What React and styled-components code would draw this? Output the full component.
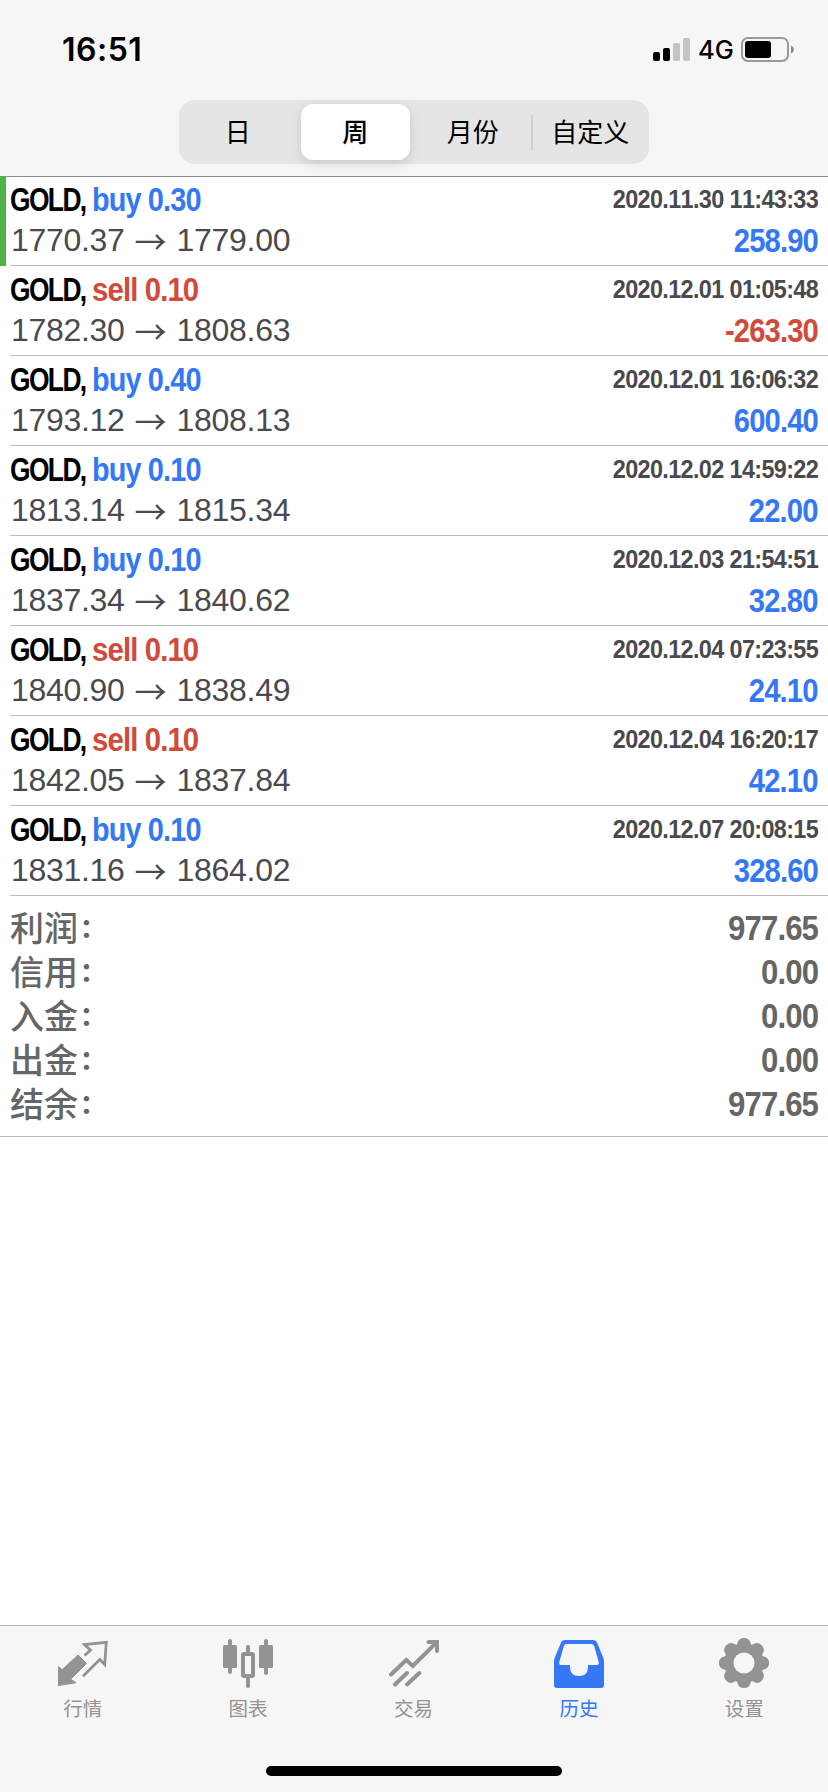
import React from "react";
import styled, { createGlobalStyle } from "styled-components";

const GlobalStyle = createGlobalStyle`
  * {
    box-sizing: border-box;
  }

  body {
    margin: 0;
    background: #fff;
    font-family: "Liberation Sans", "Noto Sans CJK SC", sans-serif;
    font-kerning: none;
  }
`;

const deals = [
  { side: "buy", lots: "0.30", open: "1770.37", close: "1779.00", time: "2020.11.30 11:43:33", profit: "258.90", marked: true },
  { side: "sell", lots: "0.10", open: "1782.30", close: "1808.63", time: "2020.12.01 01:05:48", profit: "-263.30" },
  { side: "buy", lots: "0.40", open: "1793.12", close: "1808.13", time: "2020.12.01 16:06:32", profit: "600.40" },
  { side: "buy", lots: "0.10", open: "1813.14", close: "1815.34", time: "2020.12.02 14:59:22", profit: "22.00" },
  { side: "buy", lots: "0.10", open: "1837.34", close: "1840.62", time: "2020.12.03 21:54:51", profit: "32.80" },
  { side: "sell", lots: "0.10", open: "1840.90", close: "1838.49", time: "2020.12.04 07:23:55", profit: "24.10" },
  { side: "sell", lots: "0.10", open: "1842.05", close: "1837.84", time: "2020.12.04 16:20:17", profit: "42.10" },
  { side: "buy", lots: "0.10", open: "1831.16", close: "1864.02", time: "2020.12.07 20:08:15", profit: "328.60" },
];

const totals = [
  ["利润", "977.65"],
  ["信用", "0.00"],
  ["入金", "0.00"],
  ["出金", "0.00"],
  ["结余", "977.65"],
];

const periods = ["日", "周", "月份", "自定义"];

const QuotesIcon = () => (
  <svg width="50" height="50" viewBox="0 0 50 50">
    <path
      d="M.5 28.5 4 31.8 20 17l8.5 8.5-15.8 15.8 5.3 3.4L.5 47.5z"
      fill="#939393"
      stroke="#939393"
      strokeLinejoin="round"
    />
    <path
      d="M26.5 17.500l6-5.300-6-5.700L48.300 4.300l-1.600 22.200-4.900-5L25 38.300"
      fill="none"
      stroke="#939393"
      strokeWidth="2.8"
    />
  </svg>
);

const ChartIcon = () => (
  <svg width="50" height="50" viewBox="0 0 50 50">
    <g fill="#939393">
      <rect x="5" y="1" width="4" height="35" rx="2" />
      <rect x="0" y="7" width="14" height="23" rx="1.5" />
      <rect x="41" y="1" width="4" height="36" rx="2" />
      <rect x="36" y="7" width="14" height="23" rx="1.5" />
      <rect x="23" y="7" width="4" height="8" rx="2" />
      <rect x="23" y="38" width="4" height="12" rx="2" />
    </g>
    <rect x="20" y="16" width="10" height="22" rx="1" fill="none" stroke="#939393" strokeWidth="4" />
  </svg>
);

const TradeIcon = () => (
  <svg width="50" height="50" viewBox="0 0 50 50" fill="none" stroke="#939393" strokeWidth="4">
    <path
      d="M2 36.500 17.300 22l6.500 6L48 4M39.500 4H48v9M6 46.500l12-11.500M18 46.500l12.300-11.500"
      strokeLinecap="round"
    />
  </svg>
);

const HistoryIcon = () => (
  <svg width="50" height="50" viewBox="0 0 50 50">
    <path
      fillRule="evenodd"
      fill="#3478f6"
      d="M11 2h28q3 0 4.200 3L49 19q1 2.500 1 5v23q0 3-3 3H3q-3 0-3-3V24q0-2.500 1-5L6.800 5Q8 2 11 2zM12.500 6q-2 0-2.700 2L5.300 24q-.5 3 1.700 3h9v2q0 9 9 9t9-9v-2h9q2.200 0 1.700-3L40.200 8q-.7-2-2.700-2z"
    />
  </svg>
);

const SettingsIcon = () => (
  <svg width="50" height="50" viewBox="0 0 50 50">
    <g fill="#939393">
      {[0, 45, 90, 135, 180, 225, 270, 315].map((angle) => (
        <path
          key={angle}
          d="M16 8Q18 7.500 19 3.500 20.500 0 25 0t6 3.500Q32 7.500 34 8v9H16z"
          transform={`rotate(${angle} 25 25)`}
        />
      ))}
    </g>
    <circle cx="25" cy="25" r="15" fill="none" stroke="#939393" strokeWidth="9" />
    <circle cx="25" cy="25" r="10.500" fill="#f6f6f6" />
  </svg>
);

const tabs = [
  { label: "行情", icon: <QuotesIcon /> },
  { label: "图表", icon: <ChartIcon /> },
  { label: "交易", icon: <TradeIcon /> },
  { label: "历史", icon: <HistoryIcon />, active: true },
  { label: "设置", icon: <SettingsIcon /> },
];

const App = () => (
  <>
    <GlobalStyle />
    <Screen>
      <Header>
        <StatusBar>
          <Clock>16:51</Clock>
          <StatusIcons>
            <svg width="38" height="24" viewBox="0 0 38 24">
              <rect x="0" y="14" width="7" height="9" rx="2" />
              <rect x="10" y="10" width="7" height="13" rx="2" />
              <rect x="20" y="5" width="7" height="18" rx="2" fill="#c4c4c4" />
              <rect x="30" y="0" width="7" height="23" rx="2" fill="#c4c4c4" />
            </svg>
            <Network>4G</Network>
            <svg width="54" height="26" viewBox="0 0 54 26">
              <rect x="1" y="1" width="46" height="23" rx="6" fill="none" stroke="#999" strokeWidth="2" />
              <rect x="4" y="4" width="26" height="17" rx="3" />
              <path d="M50 8.500q3 1.500 3 4t-3 4z" fill="#888" />
            </svg>
          </StatusIcons>
        </StatusBar>
        <Segments>
          {periods.map((period, i) => (
            <Segment key={period} $active={i === 1} $divided={i === 3}>
              {period}
            </Segment>
          ))}
        </Segments>
      </Header>

      <Deals>
        {deals.map((deal) => (
          <Deal key={deal.time} $marked={deal.marked}>
            <DealBody>
              <Line>
                <Title>
                  <Symbol>GOLD,</Symbol>
                  <Side $side={deal.side}>
                    {deal.side} {deal.lots}
                  </Side>
                </Title>
                <Time>{deal.time}</Time>
              </Line>
              <Line>
                <Prices>
                  <Price>{deal.open}</Price>
                  <Arrow>→</Arrow>
                  <Price>{deal.close}</Price>
                </Prices>
                <Profit $color={deal.profit.startsWith("-") ? "#d24a3a" : "#3478f6"}>
                  {deal.profit}
                </Profit>
              </Line>
            </DealBody>
          </Deal>
        ))}
      </Deals>

      <Totals>
        {totals.map(([label, value]) => (
          <Total key={label}>
            <TotalLabel>
              {label}
              <Colon>:</Colon>
            </TotalLabel>
            <TotalValue>{value}</TotalValue>
          </Total>
        ))}
      </Totals>

      <Footer>
        <Tabs>
          {tabs.map((tab) => (
            <Tab key={tab.label} $active={tab.active}>
              {tab.icon}
              <span>{tab.label}</span>
            </Tab>
          ))}
        </Tabs>
        <HomeIndicator />
      </Footer>
    </Screen>
  </>
);

export default App;

const Screen = styled.div`
  display: flex;
  flex-direction: column;
  width: 828px;
  height: 1792px;
  background: #fff;
  overflow: hidden;
`;

const Header = styled.header`
  display: flex;
  flex-direction: column;
  align-items: center;
  height: 176px;
  flex: none;
  background: #f6f6f6;
  box-shadow: 0 1px 0 #8c8c8e;
`;

const StatusBar = styled.div`
  display: flex;
  justify-content: space-between;
  align-items: center;
  width: 100%;
  height: 100px;
  padding: 0 33px 0 62px;
`;

const Clock = styled.div`
  font: 600 32px/40px Inter, sans-serif;
  letter-spacing: 0.5px;
`;

const StatusIcons = styled.div`
  display: flex;
  align-items: center;
`;

const Network = styled.span`
  width: 36px;
  margin: 0 7px 0 7px;
  font: 500 25.500px/30px Inter, sans-serif;
`;

const Segments = styled.div`
  display: flex;
  width: 470px;
  height: 64px;
  padding: 4px 0;
  border-radius: 16px;
  background: #e5e5e6;
`;

const Segment = styled.div`
  display: flex;
  align-items: center;
  justify-content: center;
  flex: 1;
  margin: 0 4.500px;
  padding-bottom: 4px;
  border-radius: 12px;
  color: #000;
  font-size: 26px;
  font-weight: ${(props) => (props.$active ? 500 : 400)};
  background: ${(props) => (props.$active ? "#fff" : "none")};
  box-shadow: ${(props) => (props.$active ? "0 4px 12px rgba(0, 0, 0, 0.12)" : "none")};

  &::before {
    content: "";
    display: ${(props) => (props.$divided ? "block" : "none")};
    width: 2px;
    height: 35px;
    margin: 4px 18px 0 -20px;
    background: #cfcfd2;
  }
`;

const Deals = styled.main`
  display: flex;
  flex-direction: column;
`;

const Deal = styled.section`
  height: 90px;
  padding-left: ${(props) => (props.$marked ? 4 : 10)}px;
  border-left: ${(props) => (props.$marked ? "6px solid #4fb14a" : "none")};
`;

const DealBody = styled.div`
  height: 90px;
  padding: 3px 10px 0 0;
  border-bottom: 1px solid #bcbcc0;
`;

const Line = styled.div`
  display: flex;
  justify-content: space-between;
  height: 41px;
  line-height: 41px;
  white-space: nowrap;
`;

const Title = styled.div`
  display: flex;
  font-size: 33px;
  font-weight: 700;
`;

const Symbol = styled.span`
  width: 82px;
  color: #000;
  letter-spacing: -2px;
  transform: scaleX(0.8);
  transform-origin: 0 50%;
`;

const Side = styled.span`
  color: ${(props) => (props.$side === "buy" ? "#3478f6" : "#d24a3a")};
  letter-spacing: -1px;
  transform: scaleX(${(props) => (props.$side === "buy" ? 0.875 : 0.89)});
  transform-origin: 0 50%;
`;

const Time = styled.span`
  color: #4a4a4e;
  font-size: 26px;
  font-weight: 700;
  letter-spacing: -0.7px;
  transform: scaleX(0.9);
  transform-origin: 100% 50%;
`;

const Prices = styled.div`
  display: flex;
  padding-left: 1px;
  color: #4a4a4e;
  font-size: 32px;
`;

const Price = styled.span`
  letter-spacing: -0.3px;
`;

const Arrow = styled.span`
  width: 52px;
  text-align: center;
  font-family: "Noto Sans CJK SC", sans-serif;
  font-weight: 400;
`;

const Profit = styled.span`
  color: ${(props) => props.$color};
  font-size: 33px;
  font-weight: 700;
  letter-spacing: -1px;
  transform: scaleX(0.886);
  transform-origin: 100% 50%;
`;

const Totals = styled.section`
  flex: none;
  height: 241px;
  padding: 10px 10px 0;
  border-bottom: 1px solid #bcbcc0;
  color: #666;
`;

const Total = styled.div`
  display: flex;
  justify-content: space-between;
  height: 44px;
  line-height: 44px;
`;

const TotalLabel = styled.span`
  display: flex;
  padding-top: 1px;
  font-size: 34px;
  font-weight: 500;
`;

const Colon = styled.span`
  margin: -3px 0 0 3px;
  font-family: Inter, sans-serif;
  font-weight: 600;
`;

const TotalValue = styled.span`
  font-size: 35px;
  font-weight: 700;
  letter-spacing: -1px;
  transform: scaleX(0.89);
  transform-origin: 100% 50%;
`;

const Footer = styled.footer`
  display: flex;
  flex-direction: column;
  align-items: center;
  justify-content: space-between;
  height: 167px;
  margin-top: auto;
  padding-bottom: 16px;
  border-top: 1px solid #b2b2b4;
  background: #f6f6f6;
`;

const Tabs = styled.nav`
  display: flex;
  width: 100%;
  padding: 12px 1px 0 0;
`;

const Tab = styled.div`
  display: flex;
  flex: 1;
  flex-direction: column;
  align-items: center;
  color: ${(props) => (props.$active ? "#3478f6" : "#939393")};
  font-size: 19.500px;
  line-height: 30px;

  span {
    margin-top: 6px;
  }
`;

const HomeIndicator = styled.div`
  width: 296px;
  height: 10px;
  border-radius: 5px;
  background: #000;
`;
